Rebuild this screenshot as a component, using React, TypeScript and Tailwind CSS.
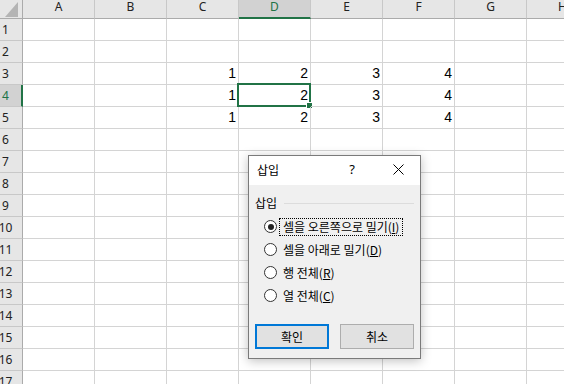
import React from 'react'

const COLS = ['A', 'B', 'C', 'D', 'E', 'F', 'G', 'H']
const ROWS = Array.from({ length: 17 }, (_, i) => i + 1)

// values by row -> column
const DATA: Record<number, Record<string, number>> = {
  3: { C: 1, D: 2, E: 3, F: 4 },
  4: { C: 1, D: 2, E: 3, F: 4 },
  5: { C: 1, D: 2, E: 3, F: 4 },
}

function HeaderRow() {
  return (
    <div className="flex h-[19px] shrink-0">
      <div className="relative w-[23px] shrink-0 bg-[#e6e6e6] border-r border-b border-[#ababab]">
        <svg className="absolute left-[5px] top-[2px]" width="13" height="15" viewBox="0 0 13 15">
          <polygon points="13,0 13,15 0,15" fill="#b4b4b4" />
        </svg>
      </div>
      {COLS.map((c) => {
        const sel = c === 'D'
        return (
          <div
            key={c}
            className={
              sel
                ? 'w-[72px] shrink-0 flex justify-center bg-[#d2d2d2] border-r border-r-[#c8c8c8] border-b-2 border-b-[#217346] text-[#217346] text-[12px] leading-[14px]'
                : 'w-[72px] shrink-0 flex justify-center bg-[#e6e6e6] border-r border-r-[#c8c8c8] border-b border-b-[#ababab] text-[#222] text-[12px] leading-[14px]'
            }
          >
            {c}
          </div>
        )
      })}
    </div>
  )
}

function Row({ r }: { r: number }) {
  const selRow = r === 4
  return (
    <div className="flex h-[22px] shrink-0">
      <div
        className={
          selRow
            ? 'w-[23px] shrink-0 flex items-center bg-[#d2d2d2] border-b border-b-[#c8c8c8] border-r-2 border-r-[#217346] text-[#217346] text-[12px]'
            : 'w-[23px] shrink-0 flex items-center bg-[#e6e6e6] border-b border-b-[#c8c8c8] border-r border-r-[#ababab] text-[#222] text-[12px]'
        }
      >
        <div className="w-[11px] flex justify-center whitespace-nowrap">{r}</div>
      </div>
      {COLS.map((c) => {
        const v = DATA[r]?.[c]
        const active = r === 4 && c === 'D'
        return (
          <div
            key={c}
            className="relative w-[72px] shrink-0 flex items-center justify-end pr-[2px] border-r border-b border-[#d4d4d4] text-[14px] text-black font-['Liberation_Sans',sans-serif]"
          >
            {v}
            {active && (
              <div className="absolute -left-[2px] -top-[2px] -right-[1px] -bottom-[1px] border-2 border-[#217346]">
                <div className="absolute -right-[4px] -bottom-[4px] w-[7px] h-[7px] bg-[#217346] border border-white" />
              </div>
            )}
          </div>
        )
      })}
    </div>
  )
}

function Radio({ checked, focus, children }: { checked?: boolean; focus?: boolean; children: React.ReactNode }) {
  return (
    <div className="flex items-center h-[23px] pl-[15px]">
      <div className="w-[13px] h-[13px] rounded-full border border-[#333] bg-white flex items-center justify-center shrink-0">
        {checked && <div className="w-[6px] h-[6px] rounded-full bg-[#222]" />}
      </div>
      <div
        className={
          focus
            ? 'ml-[2px] px-[3px] h-[18px] flex items-center border border-dotted border-black whitespace-nowrap'
            : 'ml-[2px] px-[3px] h-[18px] flex items-center border border-transparent whitespace-nowrap'
        }
      >
        {children}
      </div>
    </div>
  )
}

function InsertDialog() {
  return (
    <div className="absolute left-[248px] top-[155px] w-[173px] h-[204px] flex flex-col border border-[#7a7a7a] bg-[#f0f0f0] shadow-[0_2px_10px_rgba(0,0,0,0.25)] text-[12px] text-black font-['Noto_Sans_CJK_KR',sans-serif]">
      <div className="h-[29px] shrink-0 bg-white flex items-center pl-[8px] pb-[2px]">
        <div className="flex-1">삽입</div>
        <div className="w-[48px] flex justify-center text-[13px] font-['Noto_Sans',sans-serif]">?</div>
        <div className="w-[44px] flex justify-center">
          <svg width="11" height="11" viewBox="0 0 11 11">
            <path d="M0.5 0.5 L10.5 10.5 M10.5 0.5 L0.5 10.5" stroke="#000" strokeWidth="1" />
          </svg>
        </div>
      </div>
      <div className="flex-1 flex flex-col">
        <div className="mt-[11px] h-[14px] flex items-center pl-[6px] pr-[6px]">
          <span>삽입</span>
          <div className="flex-1 ml-[7px] h-px bg-[#dcdcdc]" />
        </div>
        <div className="mt-[5px] flex flex-col">
          <Radio checked focus>
            셀을 오른쪽으로 밀기(<span className="underline">I</span>)
          </Radio>
          <Radio>
            셀을 아래로 밀기(<span className="underline">D</span>)
          </Radio>
          <Radio>
            행 전체(<span className="underline">R</span>)
          </Radio>
          <Radio>
            열 전체(<span className="underline">C</span>)
          </Radio>
        </div>
        <div className="mt-[17px] flex justify-between px-[6px]">
          <button className="w-[74px] h-[25px] flex items-center justify-center bg-[#e1e1e1] border-2 border-[#0078d7]">
            확인
          </button>
          <button className="w-[74px] h-[25px] flex items-center justify-center bg-[#e1e1e1] border border-[#adadad]">
            취소
          </button>
        </div>
      </div>
    </div>
  )
}

export default function App() {
  return (
    <div className="relative w-[564px] h-[384px] overflow-hidden bg-white font-['Noto_Sans',sans-serif]">
      <div className="flex flex-col">
        <HeaderRow />
        {ROWS.map((r) => (
          <Row key={r} r={r} />
        ))}
      </div>
      <InsertDialog />
    </div>
  )
}
